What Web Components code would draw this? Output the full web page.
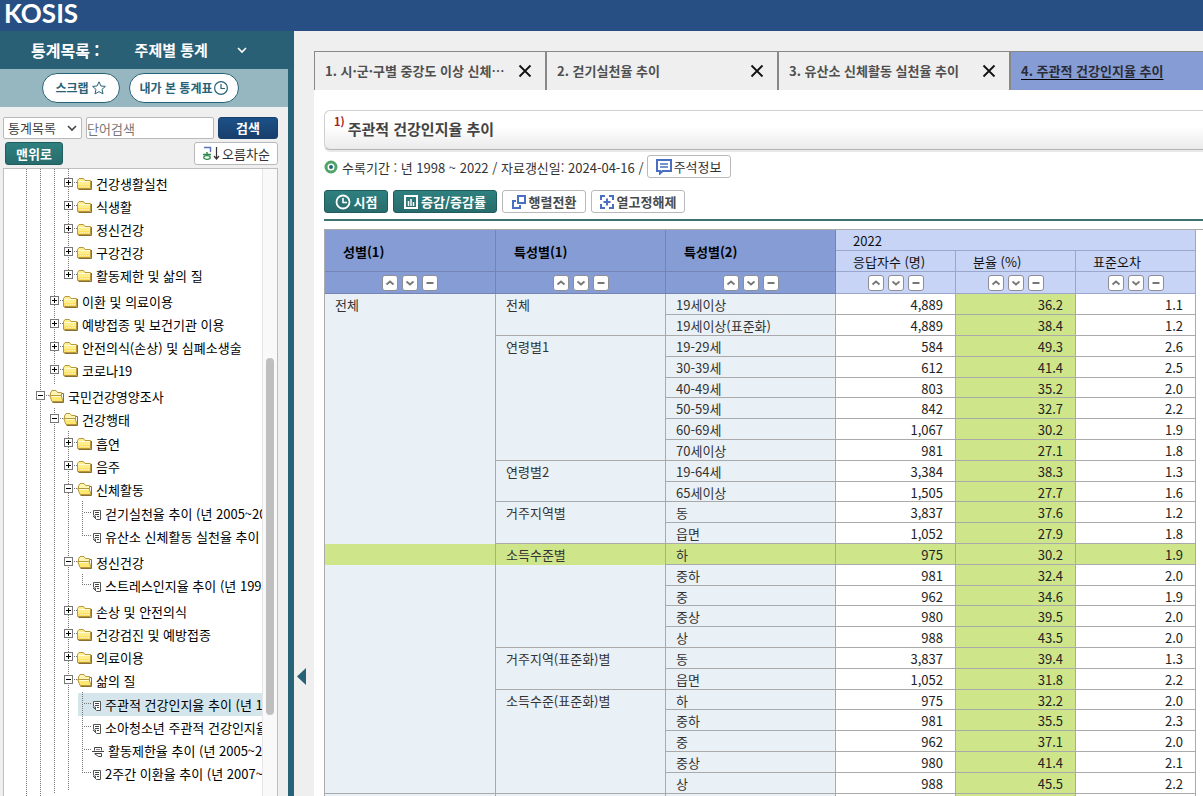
<!DOCTYPE html>
<html lang="ko">
<head>
<meta charset="utf-8">
<title>KOSIS 통계목록</title>
<style>
html,body{margin:0;height:100%}
body{font:13px/20px "Noto Sans CJK KR","Noto Sans",sans-serif;color:#222;background:#efefef;overflow:hidden}
</style>
</head>
<body>
<kosis-app>
  <kosis-logo slot="logo">KOSIS</kosis-logo>
  <kosis-sidebar slot="side"></kosis-sidebar>
  <kosis-tabs slot="tabs"></kosis-tabs>
  <kosis-report slot="report"><stat-table></stat-table></kosis-report>
</kosis-app>

<script>
const define = (name, html, setup) => {
  const tpl = document.createElement('template');
  tpl.innerHTML = html;
  customElements.define(name, class extends HTMLElement {
    constructor() {
      super();
      this.attachShadow({mode: 'open'}).append(tpl.content.cloneNode(true));
    }
    connectedCallback() { if (setup) setup(this, this.shadowRoot); }
  });
};

/* Page frame: banner, side column, folding gutter, main column */
define('kosis-app', `
<style>
:host{display:flex;flex-direction:column;height:100vh;overflow:hidden}
header{flex:none;height:31px;background:#284f84}
.body{flex:1;display:flex;min-height:0}
.side{flex:none;width:288px;border-right:6px solid #286277}
.fold{flex:none;display:flex;align-items:flex-start;width:20px;padding:637px 0 0 3px;box-sizing:border-box;border:0;background:none;cursor:pointer}
main{flex:1;min-width:0;display:flex;flex-direction:column;padding-top:20px}
</style>
<header><slot name="logo"></slot></header>
<div class="body">
  <div class="side"><slot name="side"></slot></div>
  <button class="fold" aria-label="목록 접기"><svg width="9" height="17"><path d="M9 0v17L0 8.500z" fill="#286277"/></svg></button>
  <main><slot name="tabs"></slot><slot name="report"></slot></main>
</div>`);

define('kosis-logo', `
<style>:host{display:block;padding-left:4px;font:700 26px/26px Lato,sans-serif;color:#fff}</style>
<slot></slot>`);

/* Small button; its icon and label are slotted in */
define('ui-button', `
<style>
:host{display:inline-flex}
button{flex:1;display:flex;align-items:center;justify-content:center;gap:2px;height:23px;padding:0;box-sizing:border-box;border:1px solid #b9b9b9;border-radius:3px;background:#fff;color:#333;font:13px/20px "Noto Sans CJK KR",sans-serif;white-space:nowrap}
:host([strong]) button{gap:3px;color:#4a4a4a;font-weight:700}
:host([kind=teal]) button{background:linear-gradient(#2f8080,#286c6c);border-color:#205c5c;color:#fff}
:host([kind=navy]) button{height:22px;background:linear-gradient(#1c5088,#193f6c);border-color:#193f6c;color:#fff}
:host([kind=pill]) button{height:30px;border-color:#286277;border-radius:15px;color:#286277;font-size:12px;font-weight:700}
:host([bold]) button{font-weight:700}
</style>
<button type="button"><slot></slot></button>`);

define('kosis-sidebar', `
<style>
:host{display:flex;flex-direction:column;height:100%}
.head{display:flex;align-items:center;gap:35px;height:38px;margin-right:-6px;padding-left:31px;background:#2a6076;color:#fff;font-weight:700;font-size:16px}
.head button{display:flex;align-items:center;gap:29px;border:0;padding:0;background:none;color:#fff;font:700 15px/20px "Noto Sans CJK KR",sans-serif}
.quick{display:flex;align-items:center;gap:9px;height:38px;padding-left:42px;background:#96b7c0}
.quick ui-button:first-child{width:78px}.quick ui-button:last-child{width:110px}
form{display:flex;gap:4px;padding:10px 10px 0 3px}
select,input{box-sizing:border-box;height:22px;margin:0;border:1px solid #b9b9b9;border-radius:2px;background-color:#fff;color:#444;font:13px/20px "Noto Sans CJK KR",sans-serif}
select{width:79px;padding:0 0 0 4px;appearance:none;background-image:url("data:image/svg+xml,%3Csvg xmlns='http://www.w3.org/2000/svg' width='10' height='7'%3E%3Cpath d='M1 1l4 4 4-4' fill='none' stroke='%23444' stroke-width='1.600'/%3E%3C/svg%3E");background-repeat:no-repeat;background-position:right 4px center}
input{flex:1;min-width:0;padding:0}
input::placeholder{color:#777}
form ui-button{width:60px}
.tools{display:flex;justify-content:space-between;padding:3px 10px 3px 5px}
.tools ui-button:first-child{width:58px}.tools ui-button:last-child{width:84px}
kosis-tree{flex:1;min-height:0;margin:0 10px 0 3px}
</style>
<div class="head"><span>통계목록 :</span><button type="button">주제별 통계 <svg width="10" height="7"><path d="M1 1l4 4 4-4" fill="none" stroke="#fff" stroke-width="1.600"/></svg></button></div>
<div class="quick">
  <ui-button kind="pill">스크랩<svg width="16" height="16" viewBox="0 0 16 16"><path d="M8 1.800l1.900 4.200 4.500.4-3.400 3 1 4.500L8 11.600l-4 2.300 1-4.500-3.400-3 4.500-.4z" fill="none" stroke="#286277"/></svg></ui-button>
  <ui-button kind="pill">내가 본 통계표<svg width="14" height="14"><circle cx="7" cy="7" r="6.400" fill="none" stroke="#286277" stroke-width="1.200"/><path d="M7 3v4.500h4" fill="none" stroke="#286277" stroke-width="1.200"/></svg></ui-button>
</div>
<form>
  <select aria-label="검색 대상"><option>통계목록</option></select>
  <input aria-label="검색어" placeholder="단어검색">
  <ui-button kind="navy" bold>검색</ui-button>
</form>
<div class="tools"><ui-button kind="teal" bold>맨위로</ui-button>
<ui-button><svg width="18" height="15" viewBox="0 0 18 15"><path d="M2 1.500h6.500v4.500" fill="none" stroke="#5577b8" stroke-width="1.400"/><path d="M5 6v2M1 8.500h8" stroke="#2e8b4a" stroke-width="1.400"/><ellipse cx="5" cy="11.500" rx="3.300" ry="1.800" fill="none" stroke="#2e8b4a" stroke-width="1.300"/><path d="M14.500 1v12M12 10l2.500 3 2.500-3" fill="none" stroke="#333" stroke-width="1.200"/></svg>오름차순</ui-button></div>
<kosis-tree></kosis-tree>`);

/* Catalogue tree. Node: [kind, label, children]; kinds: + closed, - open, d document, c compared document, s selected document */
const TREE = ['.', '', [['.', '', [
  ['.', '', [
    ['.', '', [['+','건강생활실천'],['+','식생활'],['+','정신건강'],['+','구강건강'],['+','활동제한 및 삶의 질']]],
    ['+','이환 및 의료이용'],['+','예방접종 및 보건기관 이용'],['+','안전의식(손상) 및 심폐소생술'],['+','코로나19']]],
  ['-','국민건강영양조사', [
    ['-','건강행태', [
      ['+','흡연'],['+','음주'],
      ['-','신체활동', [['d','걷기실천율 추이 (년 2005~2022)'],['d','유산소 신체활동 실천율 추이']]],
      ['-','정신건강', [['d','스트레스인지율 추이 (년 1998~2022)']]],
      ['+','손상 및 안전의식'],['+','건강검진 및 예방접종'],['+','의료이용'],
      ['-','삶의 질', [['s','주관적 건강인지율 추이 (년 1998~2022)'],['d','소아청소년 주관적 건강인지율 추이'],['c','활동제한율 추이 (년 2005~2022)'],['d','2주간 이환율 추이 (년 2007~2022)']]]
    ]]]]
]]]];
const FOLDER = '<path d="M.5 12.500V4.500L2 2.500h4.500L8 4.500h5.500v8z" fill="#ffee8c" stroke="#b8983f"/><path d="M1 9h12v3H1z" fill="#ffe063"/><path d="M1.500 5.500h11.500" stroke="#fffbd8"/><path d="M14.500 5v8.500H1.500" fill="none" stroke="#8a7030"/><path d="M3 10.500h9" stroke="#fff6b5" stroke-dasharray="1 1"/>';
const FOLDER_OPEN = '<path d="M1.500 8V4L3 1.500h4l1.500 2h4V7" fill="#fff6b4" stroke="#b8983f"/><path d="M.7 6.500h11.500l1.800 6H3z" fill="#ffe870" stroke="#b8983f"/><path d="M2.500 7.500h9" stroke="#fffbd8"/><path d="M13 4.500h1.500v9H3.500" fill="none" stroke="#8a7030"/>';
const DOC = '<path d="M1.500 5V.5h7v9h-4L1 6h2.500v2" fill="#fff" stroke="#555"/><path d="M3 2.500h4M3 4.500h4M5 6.500h2" stroke="#444"/>';
const COMPARE = '<path d="M2.500 3.500v-3h7v3M0 4.500h12M2.500 6.500h7v3h-3L3 7" fill="none" stroke="#444"/><path d="M4 2.500h4" stroke="#888"/>';
const buildNode = ([kind, label, kids]) => {
  let row = '';
  if (kind === '+' || kind === '-') {
    const bar = kind === '+' ? '<path d="M4.500 2v5"/>' : '';
    row = `<div class="row"><button class="box" aria-label="${kind === '+' ? '펼치기' : '접기'}"><svg width="9" height="9"><rect x=".5" y=".5" width="8" height="8" fill="#fff" stroke="#777"/><g stroke="#000"><path d="M2 4.500h5"/>${bar}</g></svg></button><i class="dots"></i><svg class="pic" width="15" height="15">${kind === '+' ? FOLDER : FOLDER_OPEN}</svg><a href="#">${label}</a></div>`;
  } else if (kind !== '.') {
    const wide = kind === 'c';
    row = `<div class="row leaf${kind === 's' ? ' sel' : ''}"><i class="dots"></i><svg class="pic" width="${wide ? 12 : 9}" height="10">${wide ? COMPARE : DOC}</svg><a href="#">${label}</a></div>`;
  }
  if (!kids) return `<li>${row}</li>`;
  const classes = [];
  if (label === '건강행태') classes.push('deep', 'more');
  if (label === '신체활동' || label === '삶의 질') classes.push('deep');
  if (label === '국민건강영양조사') classes.push('more');
  if (label === '' && kids[0][0] === '.') classes.push('more');
  return `<li>${row}<ul class="${classes.join(' ')}">${kids.map(buildNode).join('')}</ul></li>`;
};
define('kosis-tree', `
<style>
:host{display:flex;border:1px solid #bfbfbf;border-bottom:0;background:#fff;overflow:hidden}
.view{flex:1;min-width:0;overflow:hidden;color:#000}
.bar{flex:none;width:15px;border-left:1px solid #e6e6e6;background:#f9f9f9;display:flex;justify-content:center;padding-top:189px;box-sizing:border-box}
.thumb{width:8px;height:357px;border-radius:4px;background:#bfbfbf}
ul{position:relative;list-style:none;margin:0 0 0 14px;padding:0 0 3px}
.view>ul{margin-left:4px;padding:0}
ul::before{content:"";position:absolute;z-index:1;left:4px;top:0;bottom:14px;width:1px;background:repeating-linear-gradient(#777 0 1px,transparent 1px 2px)}
.view>ul::before{display:none}
ul.more::before{bottom:0}
ul.deep{padding-top:1px}
ul.first{padding-top:3px}
.row{position:relative;z-index:2;display:flex;align-items:center;height:23px;white-space:nowrap}
.box{display:block;border:0;padding:0;width:9px;height:9px;margin-bottom:2px;flex:none}
.box svg{display:block}
.dots{flex:none;width:4px;height:1px;margin-bottom:2px;background:repeating-linear-gradient(90deg,transparent 0 1px,#777 1px 2px)}
.leaf .dots{width:9px;margin-left:5px;margin-bottom:2px}
.leaf.row{z-index:0}
.pic{flex:none;margin-right:4px}
.leaf .pic{margin-top:2px}
.sel{background:#d4e6ec}
a{color:inherit;text-decoration:none}
</style>
<div class="view"><ul></ul></div><div class="bar"><div class="thumb"></div></div>`,
(el, root) => {
  root.querySelector('.view>ul').innerHTML = buildNode(TREE);
  root.querySelector('.box').closest('ul').classList.add('first');
});

define('kosis-tabs', `
<style>
:host{display:flex;overflow:hidden;height:39px}
.tab{flex:0 0 232px;box-sizing:border-box;display:flex;align-items:center;justify-content:space-between;padding:0 13px 0 10px;border:solid #888;border-width:1px 1px 0;background:#efefef}
a{color:#505050;font-weight:700;text-decoration:none;white-space:nowrap}
button{display:block;border:0;padding:0;background:none;height:14px}
svg{display:block}
.on{background:#859dd4}
.on a{color:#2c2c38;text-decoration:underline #000;text-underline-offset:3px}
</style>`,
(el, root) => {
  ['1. 시·군·구별 중강도 이상 신체⋯', '2. 걷기실천율 추이', '3. 유산소 신체활동 실천율 추이', '4. 주관적 건강인지율 추이'].forEach((t, i) => {
    const d = document.createElement('div');
    d.className = i === 3 ? 'tab on' : 'tab';
    d.innerHTML = `<a href="#">${t}</a><button aria-label="닫기"><svg width="14" height="14"><path d="M1.500 1.500l11 11M12.500 1.500l-11 11" stroke="#111" stroke-width="1.800"/></svg></button>`;
    root.append(d);
  });
});

define('kosis-report', `
<style>
:host{flex:1;display:block;min-height:0;overflow:hidden;background:#fff;padding:20px 0 0 10px}
h1{display:flex;gap:3px;margin:0;height:40px;box-sizing:border-box;padding:8px 0 0 9px;border:1px solid #d0d0d0;border-width:1px 0 1px 1px;border-bottom-color:#b4b4b4;border-radius:6px 0 0 6px;background:linear-gradient(#fff 40%,#ebebeb);box-shadow:0 2px 0 #e8e8e8;font-size:15px;line-height:20px;color:#444}
h1 sup{font-size:11px;line-height:12px;height:12px;margin-top:-4px;color:#a8201a;font-weight:700}
.info{display:flex;align-items:center;height:23px;margin:5px 0 12px;color:#333}
.info svg.dot{margin-right:4px}
.info span{padding-top:2px}
.info ui-button{width:84px;margin-left:3px}
.tools{display:flex;gap:5px;padding-bottom:6px;border-bottom:2px solid #3d7272;margin-bottom:8px}
.tools ui-button:nth-child(1){width:64px}.tools ui-button:nth-child(2){width:104px}.tools ui-button:nth-child(3){width:84px}.tools ui-button:nth-child(4){width:94px}
</style>
<h1><sup>1)</sup>주관적 건강인지율 추이</h1>
<div class="info"><svg class="dot" width="14" height="14"><circle cx="7" cy="7" r="5" fill="#fff" stroke="#4fa468" stroke-width="3"/><circle cx="7" cy="7" r="2" fill="#1e6b6c"/></svg><span>수록기간 : 년 1998 ~ 2022 / 자료갱신일: 2024-04-16 /</span><ui-button><svg width="16" height="16"><path d="M1 1h14v11H6.500L4 14.500V12H1z" fill="none" stroke="#4a6fc0" stroke-width="2"/><path d="M4 5h8M4 8h8" stroke="#4a6fc0" stroke-width="1.600"/></svg>주석정보</ui-button></div>
<div class="tools">
<ui-button kind="teal" strong><svg width="16" height="16"><circle cx="8" cy="8" r="6.500" fill="none" stroke="#fff" stroke-width="1.800"/><path d="M8 4v4.500h4" fill="none" stroke="#fff" stroke-width="1.600"/></svg>시점</ui-button>
<ui-button kind="teal" strong><svg width="14" height="14"><path d="M1 1h12v12H1z" fill="none" stroke="#fff" stroke-width="2"/><path d="M4.500 6v5M7 4v7M9.500 7v4" stroke="#fff" stroke-width="1.500"/></svg>증감/증감률</ui-button>
<ui-button strong><svg width="14" height="14"><path d="M6 1h7v7H6z" fill="none" stroke="#4a6fc0" stroke-width="2"/><path d="M4 6H1v7h7v-3" fill="none" stroke="#4a6fc0" stroke-width="2"/></svg>행렬전환</ui-button>
<ui-button strong><svg width="14" height="14"><path d="M1 5V1h4M9 1h4v4M13 9v4H9M5 13H1V9" fill="none" stroke="#4a6fc0" stroke-width="2"/><path d="M7 3.500v7M3.500 7h7" stroke="#4a6fc0" stroke-width="2"/></svg>열고정해제</ui-button>
</div>
<slot></slot>`);

define('sort-buttons', `
<style>
:host{display:flex;justify-content:center;gap:4px}
button{width:16px;height:16px;box-sizing:border-box;padding:0;border:1px solid #8e8e96;border-radius:3px;background:#fff}
svg{display:block}
</style>
<button aria-label="오름차순"><svg width="14" height="14"><path d="M3.500 8.500L7 5.500l3.500 3" fill="none" stroke="#777" stroke-width="1.800"/></svg></button>
<button aria-label="내림차순"><svg width="14" height="14"><path d="M3.500 5.500L7 8.500l3.500-3" fill="none" stroke="#777" stroke-width="1.800"/></svg></button>
<button aria-label="정렬해제"><svg width="14" height="14"><path d="M3.500 7h7" stroke="#777" stroke-width="2"/></svg></button>`);

const GROUPS = [
  ['전체', [['19세이상','4,889','36.2','1.1'],['19세이상(표준화)','4,889','38.4','1.2']]],
  ['연령별1', [['19-29세','584','49.3','2.6'],['30-39세','612','41.4','2.5'],['40-49세','803','35.2','2.0'],['50-59세','842','32.7','2.2'],['60-69세','1,067','30.2','1.9'],['70세이상','981','27.1','1.8']]],
  ['연령별2', [['19-64세','3,384','38.3','1.3'],['65세이상','1,505','27.7','1.6']]],
  ['거주지역별', [['동','3,837','37.6','1.2'],['읍면','1,052','27.9','1.8']]],
  ['소득수준별', [['하','975','30.2','1.9'],['중하','981','32.4','2.0'],['중','962','34.6','1.9'],['중상','980','39.5','2.0'],['상','988','43.5','2.0']]],
  ['거주지역(표준화)별', [['동','3,837','39.4','1.3'],['읍면','1,052','31.8','2.2']]],
  ['소득수준(표준화)별', [['하','975','32.2','2.0'],['중하','981','35.5','2.3'],['중','962','37.1','2.0'],['중상','980','41.4','2.1'],['상','988','45.5','2.2']]]
];
define('stat-table', `
<style>
:host{display:block;border-top:1px solid #aaa;padding-right:7px}
table{width:100%;table-layout:fixed;border-collapse:separate;border-spacing:0;border-left:1px solid #aaa}
col.lead{width:171px}
col.num{width:120px}
th,td{box-sizing:border-box;padding:2px 0 0;border:solid #aaa;border-width:0 1px 1px 0;overflow:hidden;white-space:nowrap;text-align:left;font-weight:400;line-height:16px}
thead th{height:21px;color:#111;padding-left:17px;background:#c7d4f5;border-color:#9aa6cc}
thead th.dim{background:#859dd4;border-color:#7484b4;font-weight:700;color:#000}
thead th.dim{padding-left:18px}
thead .sort th,thead .sort th.dim{height:22px;padding:0}
tbody th,tbody td{height:21px}
tbody tr:nth-child(5n)>*{height:20px}
tbody th{background:#e9f0f6;padding-left:10px;color:#333}
tbody th.run{border-bottom-width:0;padding-bottom:1px}
td{background:#fff;text-align:right;padding-right:12px;color:#222}
td.mark,tr.hot th,tr.hot td{background:#cfe58a}
</style>
<table>
<colgroup><col class="lead"><col><col><col class="num"><col class="num"><col class="num"></colgroup>
<thead>
<tr><th class="dim" rowspan="2">성별(1)</th><th class="dim" rowspan="2">특성별(1)</th><th class="dim" rowspan="2">특성별(2)</th><th colspan="3">2022</th></tr>
<tr><th>응답자수 (명)</th><th>분율 (%)</th><th>표준오차</th></tr>
<tr class="sort"><th class="dim"><sort-buttons></sort-buttons></th><th class="dim"><sort-buttons></sort-buttons></th><th class="dim"><sort-buttons></sort-buttons></th><th><sort-buttons></sort-buttons></th><th><sort-buttons></sort-buttons></th><th><sort-buttons></sort-buttons></th></tr>
</thead><tbody></tbody></table>`,
(el, root) => {
  let n = 0, html = '';
  GROUPS.forEach(([group, rows], g) => rows.forEach(([label, count, rate, err], i) => {
    const lastInGroup = i === rows.length - 1;
    const last = lastInGroup && g === GROUPS.length - 1;
    const hot = group === '소득수준별' && i === 0;
    html += `<tr${hot ? ' class="hot"' : ''}><th class="${last ? '' : 'run'}">${n++ ? '' : '전체'}</th><th class="${lastInGroup ? '' : 'run'}">${i ? '' : group}</th><th>${label}</th><td>${count}</td><td class="mark">${rate}</td><td>${err}</td></tr>`;
  }));
  html += '<tr><th class="run"></th><th class="run"></th><th></th><td></td><td class="mark"></td><td></td></tr>';
  root.querySelector('tbody').innerHTML = html;
});
</script>
</body>
</html>
